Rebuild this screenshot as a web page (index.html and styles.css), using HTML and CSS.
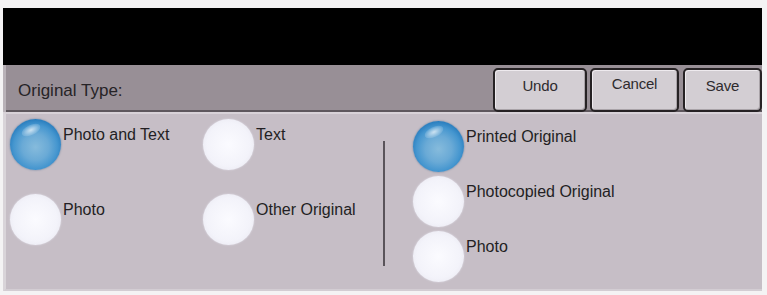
FILE: index.html
```html
<!DOCTYPE html>
<html>
<head>
<meta charset="utf-8">
<link rel="stylesheet" href="styles.css">
</head>
<body>
<div class="screen">
  <div class="topbar"></div>
  <div class="header">
    <div class="title">Original Type:</div>
    <div class="buttons">
      <div class="btn btn-undo">Undo</div>
      <div class="btn btn-cancel">Cancel</div>
      <div class="btn btn-save">Save</div>
    </div>
  </div>
  <div class="content">
    <div class="left-group">
      <div class="option"><span class="radio on"></span><span class="label">Photo and Text</span></div>
      <div class="option"><span class="radio"></span><span class="label">Text</span></div>
      <div class="option"><span class="radio"></span><span class="label">Photo</span></div>
      <div class="option"><span class="radio"></span><span class="label">Other Original</span></div>
    </div>
    <div class="divider"></div>
    <div class="right-group">
      <div class="option"><span class="radio on"></span><span class="label">Printed Original</span></div>
      <div class="option"><span class="radio"></span><span class="label">Photocopied Original</span></div>
      <div class="option"><span class="radio"></span><span class="label">Photo</span></div>
    </div>
  </div>
</div>
</body>
</html>
```
FILE: styles.css
```css
html, body {
  margin: 0;
  padding: 0;
  background: #f4f3f4;
}
body {
  font-family: "Liberation Sans", Arial, sans-serif;
}
.screen {
  margin: 8px 0 0 3px;
  width: 759px;
}
.topbar {
  height: 57px;
  background: #000;
}
.header {
  height: 47px;
  background: #988f96;
  display: flex;
  justify-content: space-between;
  align-items: flex-end;
  border-left: 3px solid #b9b2b8;
  box-shadow: inset 0 -2px 0 #5e575d;
}
.title {
  font-size: 17px;
  color: #262326;
  padding: 0 0 11px 12px;
  align-self: flex-end;
}
.buttons {
  display: flex;
  align-items: flex-end;
  height: 44px;
}
.btn {
  box-sizing: border-box;
  height: 44px;
  background: #d3ced3;
  border: 2px solid #262224;
  border-radius: 5px;
  box-shadow: inset 1px 1px 0 #eeeaee, inset -1px -1px 0 #a9a3a8;
  font-size: 15px;
  color: #2e2b2e;
  text-align: center;
  padding-top: 7px;
  letter-spacing: -0.2px;
}
.btn-undo { width: 94px; margin-right: 3px; }
.btn-cancel { width: 89px; margin-right: 4px; padding-top: 5px; }
.btn-save { width: 79px; }
.content {
  height: 170px;
  background: #c6bec6;
  border-left: 3px solid #d9d4d9;
  border-top: 2px solid #d8d2d8;
  border-bottom: 2px solid #d3cdd3;
  display: flex;
  align-items: flex-start;
  padding: 5px 0 0 4px;
}
.left-group {
  display: grid;
  grid-template-columns: 193px 170px;
  grid-template-rows: 51px 51px;
  row-gap: 24px;
}
.divider {
  width: 2px;
  height: 125px;
  background: #5a545a;
  margin: 22px 0 0 10px;
}
.right-group {
  display: flex;
  flex-direction: column;
  gap: 4px;
  margin: 2px 0 0 28px;
}
.option {
  display: flex;
  align-items: flex-start;
  height: 51px;
}
.radio {
  flex: none;
  width: 51px;
  height: 51px;
  border-radius: 50%;
  background: radial-gradient(circle at 50% 50%, #fbfbff 0%, #f3f3fa 60%, #e9e8f1 85%, #d9d5e0 100%);
  box-shadow: 0 0 2px 0 rgba(230, 228, 238, 0.9);
  position: relative;
}
.radio.on {
  background: radial-gradient(circle at 50% 55%, #86bbdc 0%, #6aaad6 35%, #4596cf 58%, #2479bb 76%, #165d9c 90%, #194b7a 100%);
  box-shadow: 0 0 2px 0 rgba(30, 80, 130, 0.6);
}
.radio.on::after {
  content: "";
  position: absolute;
  left: 11px;
  top: 6px;
  width: 20px;
  height: 10px;
  border-radius: 50%;
  background: radial-gradient(ellipse at 50% 50%, rgba(255,255,255,0.7) 0%, rgba(255,255,255,0.2) 60%, rgba(255,255,255,0) 100%);
  transform: rotate(-25deg);
}
.label {
  font-size: 16px;
  line-height: 18px;
  color: #231f23;
  padding: 7px 0 0 2px;
  white-space: nowrap;
}
```
